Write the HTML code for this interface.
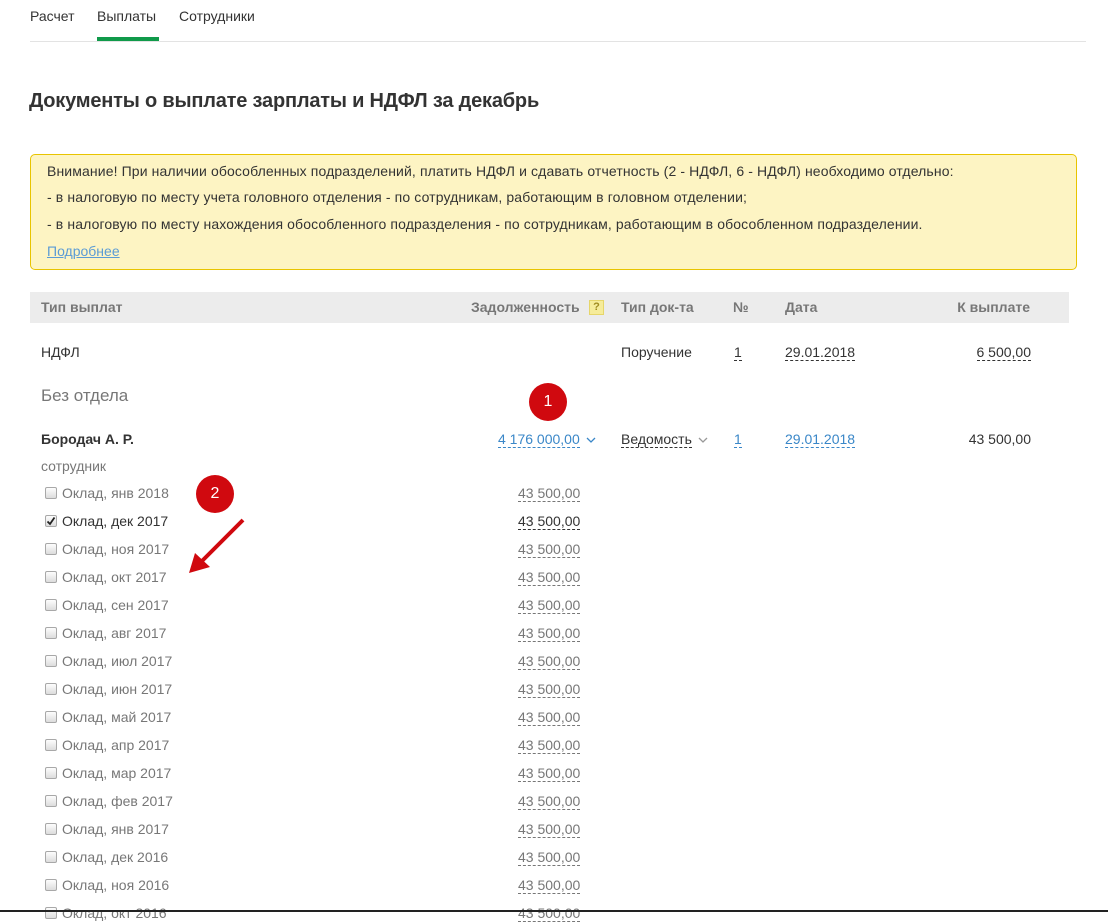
<!DOCTYPE html>
<html><head><meta charset="utf-8"><style>
*{margin:0;padding:0;box-sizing:border-box}
body{width:1108px;height:912px;overflow:hidden;background:#fff;font-family:"Liberation Sans",Arial,sans-serif;font-size:14px;color:#333;position:relative}
.a{position:absolute;white-space:nowrap}
.tab{top:8px}
.dash{border-bottom:1px dashed #333;line-height:16px}
.bl{color:#3a87c8;border-bottom:1px dashed #3a87c8;line-height:16px}
.g{color:#777}
.gd{color:#777;border-bottom:1px dashed #777;line-height:16px}
.cb{position:absolute;width:12px;height:12px;border:1px solid #a8a8a8;border-radius:2px;background:linear-gradient(#fdfdfd,#dcdcdc)}
.circ{position:absolute;width:38px;height:38px;border-radius:50%;background:#d0090f;color:#fff;text-align:center;line-height:38px;font-size:16px}
.w{letter-spacing:0.12px}
</style></head><body>
<div class="a tab" style="left:30px">Расчет</div>
<div class="a tab" style="left:97px">Выплаты</div>
<div class="a tab" style="left:179px">Сотрудники</div>
<div class="a" style="left:30px;top:41px;width:1056px;height:1px;background:#e3e3e3"></div>
<div class="a" style="left:97px;top:37px;width:62px;height:4px;background:#109a4a"></div>
<div class="a" style="left:29px;top:90px;font-size:20px;font-weight:bold;color:#333;letter-spacing:-0.2px">Документы о выплате зарплаты и НДФЛ за декабрь</div>
<div class="a" style="left:30px;top:154px;width:1047px;height:116px;background:#fdf4c3;border:1px solid #e8c400;border-radius:5px"></div>
<div class="a w" style="left:47px;top:163px">Внимание! При наличии обособленных подразделений, платить НДФЛ и сдавать отчетность (2 - НДФЛ, 6 - НДФЛ) необходимо отдельно:</div>
<div class="a w" style="left:47px;top:189px">- в налоговую по месту учета головного отделения - по сотрудникам, работающим в головном отделении;</div>
<div class="a w" style="left:47px;top:216px">- в налоговую по месту нахождения обособленного подразделения - по сотрудникам, работающим в обособленном подразделении.</div>
<div class="a" style="left:47px;top:243px;color:#5b9bd5;text-decoration:underline">Подробнее</div>
<div class="a" style="left:30px;top:292px;width:1039px;height:31px;background:#ececec"></div>
<div class="a g" style="left:41px;top:299px;font-weight:bold">Тип выплат</div>
<div class="a g" style="left:471px;top:299px;font-weight:bold">Задолженность</div>
<div class="a" style="left:589px;top:300px;width:15px;height:15px;background:#f6ec9a;border:1px solid #e6d66a;color:#a08c20;font-size:11px;font-weight:bold;text-align:center;line-height:13px">?</div>
<div class="a g" style="left:621px;top:299px;font-weight:bold">Тип док-та</div>
<div class="a g" style="left:733px;top:299px;font-weight:bold">№</div>
<div class="a g" style="left:785px;top:299px;font-weight:bold">Дата</div>
<div class="a g" style="right:78px;top:299px;font-weight:bold">К выплате</div>
<div class="a" style="left:41px;top:344px">НДФЛ</div>
<div class="a" style="left:621px;top:344px">Поручение</div>
<div class="a dash" style="left:734px;top:344px">1</div>
<div class="a dash" style="left:785px;top:344px">29.01.2018</div>
<div class="a dash" style="right:77px;top:344px">6 500,00</div>
<div class="a" style="left:41px;top:386px;font-size:17px;color:#777">Без отдела</div>
<div class="circ" style="left:529px;top:383px">1</div>
<div class="a" style="left:41px;top:431px;font-weight:bold">Бородач А. Р.</div>
<div class="a bl" style="left:498px;top:431px">4 176 000,00</div>
<svg class="a" style="left:586px;top:437px" width="10" height="7"><path d="M1 1 L5 5 L9 1" fill="none" stroke="#3a87c8" stroke-width="1.3"/></svg>
<div class="a dash" style="left:621px;top:431px">Ведомость</div>
<svg class="a" style="left:698px;top:437px" width="10" height="7"><path d="M1 1 L5 5 L9 1" fill="none" stroke="#999" stroke-width="1.3"/></svg>
<div class="a bl" style="left:734px;top:431px">1</div>
<div class="a bl" style="left:785px;top:431px">29.01.2018</div>
<div class="a" style="right:77px;top:431px">43 500,00</div>
<div class="a g" style="left:41px;top:458px">сотрудник</div>
<div class="circ" style="left:196px;top:475px">2</div>
<svg class="a" style="left:185px;top:515px" width="65" height="62"><line x1="58" y1="5" x2="14" y2="49" stroke="#d0090f" stroke-width="4"/><polygon points="4,58 10,38 25,52" fill="#d0090f"/></svg>
<div id="rows"></div>
<script>
var m=["янв 2018","дек 2017","ноя 2017","окт 2017","сен 2017","авг 2017","июл 2017","июн 2017","май 2017","апр 2017","мар 2017","фев 2017","янв 2017","дек 2016","ноя 2016","окт 2016"];
var h="";
m.forEach(function(s,i){var y=485+i*28;var on=i==1;
h+='<div class="cb" style="left:45px;top:'+(y+2)+'px"></div>';
if(on)h+='<svg class="a" style="left:45px;top:'+(y+2)+'px" width="12" height="12"><path d="M2.5 6.5 L5 9 L9.5 2.5" fill="none" stroke="#222" stroke-width="1.8"/></svg>';
h+='<div class="a" style="left:62px;top:'+y+'px;color:'+(on?'#333':'#777')+'">Оклад, '+s+'</div>';
h+='<div class="a '+(on?'dash':'gd')+'" style="left:518px;top:'+y+'px">43 500,00</div>';});
document.getElementById("rows").innerHTML=h;
</script>
<div class="a" style="left:0;top:910px;width:1108px;height:2px;background:#222"></div>
</body></html>
